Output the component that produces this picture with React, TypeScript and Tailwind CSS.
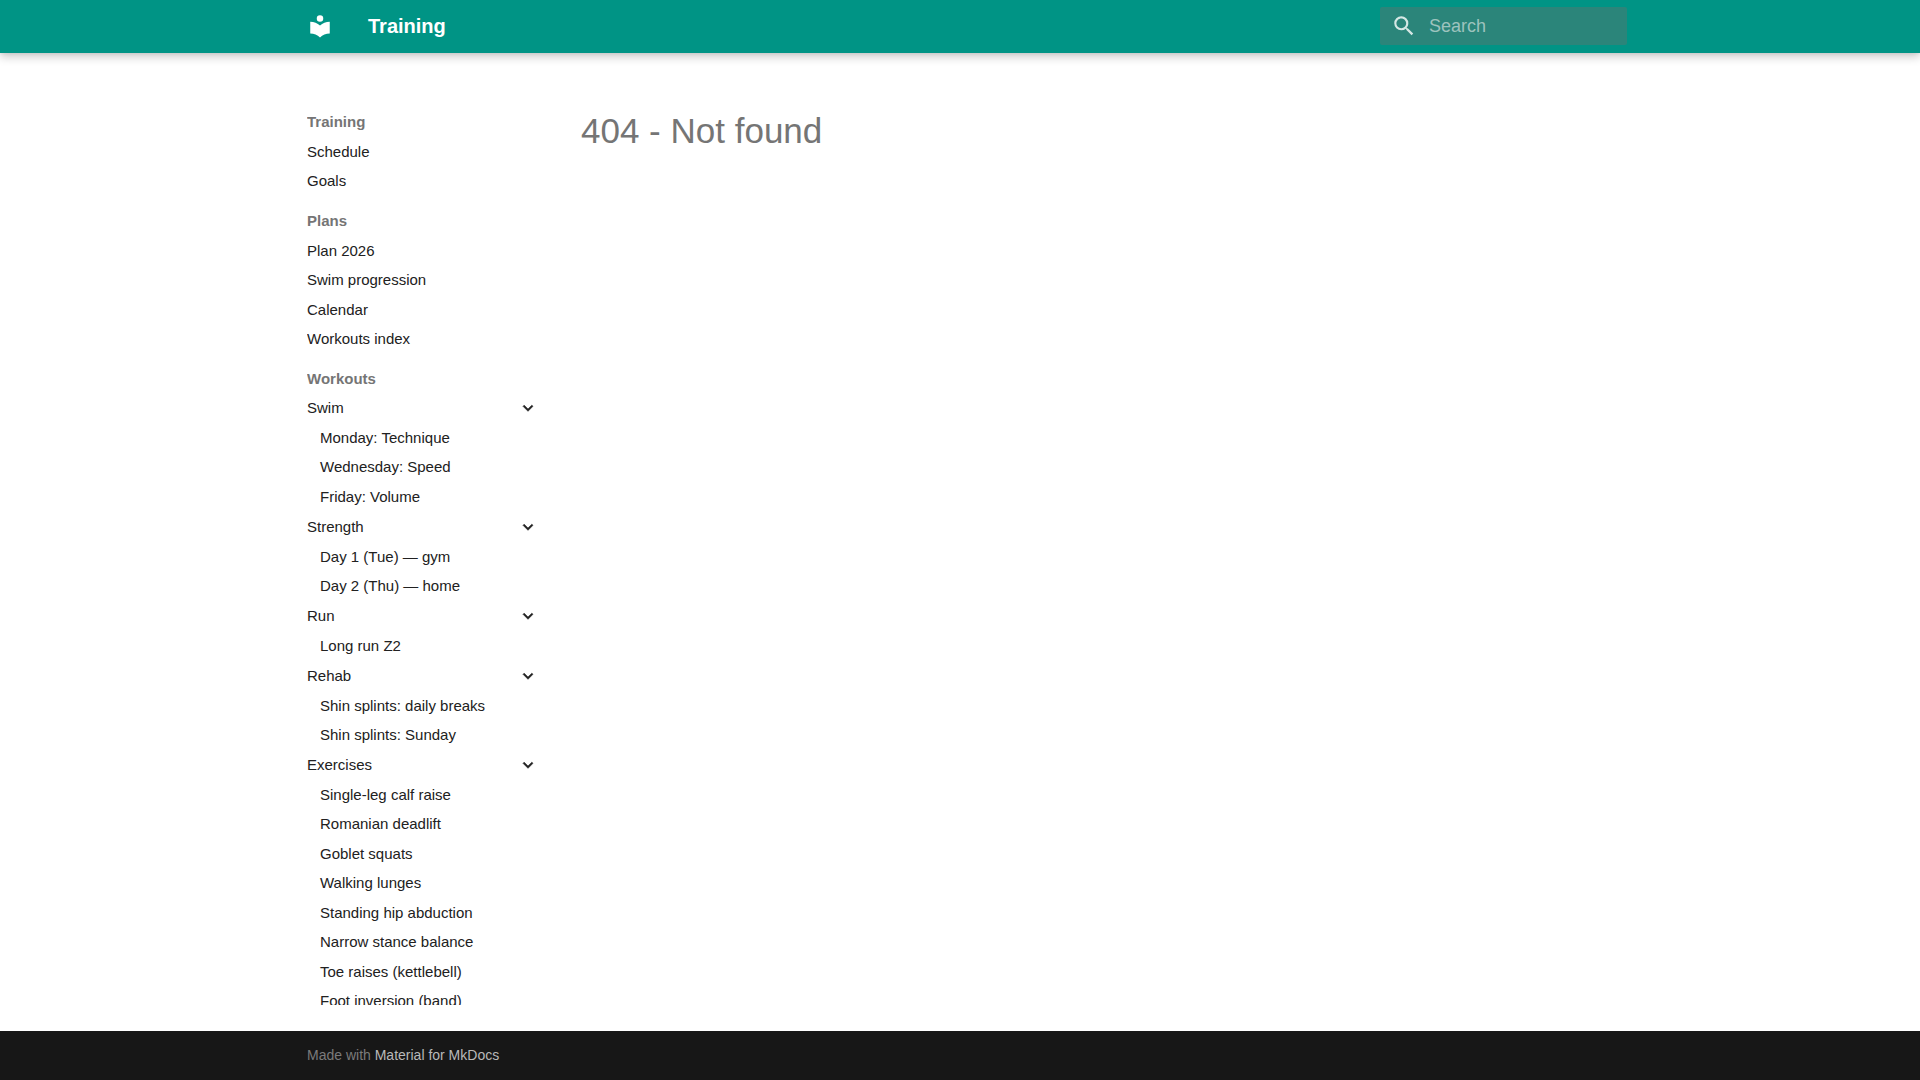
import { useState } from 'react'

interface NavGroup {
  title: string
  items: string[]
}

const SECTIONS = [
  { title: 'Training', items: ['Schedule', 'Goals'] },
  { title: 'Plans', items: ['Plan 2026', 'Swim progression', 'Calendar', 'Workouts index'] },
]

const WORKOUTS: NavGroup[] = [
  { title: 'Swim', items: ['Monday: Technique', 'Wednesday: Speed', 'Friday: Volume'] },
  { title: 'Strength', items: ['Day 1 (Tue) — gym', 'Day 2 (Thu) — home'] },
  { title: 'Run', items: ['Long run Z2'] },
  { title: 'Rehab', items: ['Shin splints: daily breaks', 'Shin splints: Sunday'] },
  {
    title: 'Exercises',
    items: [
      'Single-leg calf raise',
      'Romanian deadlift',
      'Goblet squats',
      'Walking lunges',
      'Standing hip abduction',
      'Narrow stance balance',
      'Toe raises (kettlebell)',
      'Foot inversion (band)',
    ],
  },
]

function Header() {
  const [query, setQuery] = useState('')

  return (
    <header className="relative z-10 bg-[#009485] text-white shadow-[0_0_4px_#0000001a,0_4px_9px_#00000033]">
      <div className="mx-auto flex h-[53px] max-w-[1342px] items-center pr-1 pb-px pl-[18px]">
        <a href="#" aria-label="Training">
          <svg viewBox="0 0 24 24" className="size-[26px] fill-current">
            <path d="M12 8a3 3 0 0 0 3-3 3 3 0 0 0-3-3 3 3 0 0 0-3 3 3 3 0 0 0 3 3m0 3.54C9.64 9.35 6.5 8 3 8v11c3.5 0 6.64 1.35 9 3.54 2.36-2.19 5.5-3.54 9-3.54V8c-3.5 0-6.64 1.35-9 3.54" />
          </svg>
        </a>
        <span className="ml-[35px] flex-1 text-xl font-bold">Training</span>
        <label className="flex h-[38px] w-[247px] items-center rounded-xs bg-[#2b857a] pl-[11px]">
          <svg viewBox="0 0 24 24" className="size-[26px] shrink-0 fill-[#d5e7e4]">
            <path d="M9.5 3A6.5 6.5 0 0 1 16 9.5c0 1.61-.59 3.09-1.56 4.23l.27.27h.79l5 5-1.5 1.5-5-5v-.79l-.27-.27A6.516 6.516 0 0 1 9.5 16 6.5 6.5 0 0 1 3 9.5 6.5 6.5 0 0 1 9.5 3m0 2C7 5 5 7 5 9.5S7 14 9.5 14 14 12 14 9.5 12 5 9.5 5" />
          </svg>
          <input
            type="text"
            aria-label="Search"
            placeholder="Search"
            value={query}
            onChange={(e) => setQuery(e.target.value)}
            className="ml-3 w-full min-w-0 bg-transparent text-lg outline-none placeholder:text-[#9dc3be]"
          />
        </label>
      </div>
    </header>
  )
}

function NavLink({ label }: { label: string }) {
  return (
    <li className="mt-[10px] even:mt-[9px]">
      <a href="#" className="block hover:text-[#009485]">
        {label}
      </a>
    </li>
  )
}

function Group({ group }: { group: NavGroup }) {
  const [open, setOpen] = useState(true)

  return (
    <li className="mt-[10px] first:mt-[9px]">
      <button
        type="button"
        aria-expanded={open}
        onClick={() => setOpen(!open)}
        className="flex w-full items-center justify-between text-left"
      >
        {group.title}
        <svg
          viewBox="0 0 24 24"
          className={`size-5 fill-current stroke-current ${open ? 'rotate-90' : ''}`}
          strokeWidth="0.7"
        >
          <path d="M8.59 16.58 13.17 12 8.59 7.41 10 6l6 6-6 6z" />
        </svg>
      </button>
      {open && (
        <ul className="pl-[13px]">
          {group.items.map((item) => (
            <NavLink key={item} label={item} />
          ))}
        </ul>
      )}
    </li>
  )
}

function Sidebar() {
  return (
    <nav className="w-[231px] shrink-0 overflow-y-auto pt-[26px] text-[15px] leading-5 text-[#212121] [scrollbar-width:none]">
      {SECTIONS.map((section) => (
        <section key={section.title} className="mb-5">
          <h2 className="font-bold text-[#757575]">{section.title}</h2>
          <ul>
            {section.items.map((item) => (
              <NavLink key={item} label={item} />
            ))}
          </ul>
        </section>
      ))}
      <section>
        <h2 className="font-bold text-[#757575]">Workouts</h2>
        <ul>
          {WORKOUTS.map((group) => (
            <Group key={group.title} group={group} />
          ))}
        </ul>
      </section>
    </nav>
  )
}

export default function App() {
  return (
    <div className="flex h-screen flex-col bg-white font-['Liberation_Sans',Arial,sans-serif]">
      <Header />
      <div className="mx-auto mt-[33px] mb-[26px] flex min-h-0 w-full max-w-[1342px] flex-1 px-[18px]">
        <Sidebar />
        <main className="ml-[43px] flex-1 pt-[22px]">
          <h1 className="text-[35px] leading-[46px] text-[#757575]">404 - Not found</h1>
        </main>
      </div>
      <footer className="bg-[#171717]">
        <div className="mx-auto flex h-[49px] max-w-[1342px] items-center px-[18px] pb-px text-sm text-[#7b7b7b]">
          <p>
            Made with{' '}
            <a href="#" className="text-[#b9b9b9]">
              Material for MkDocs
            </a>
          </p>
        </div>
      </footer>
    </div>
  )
}
